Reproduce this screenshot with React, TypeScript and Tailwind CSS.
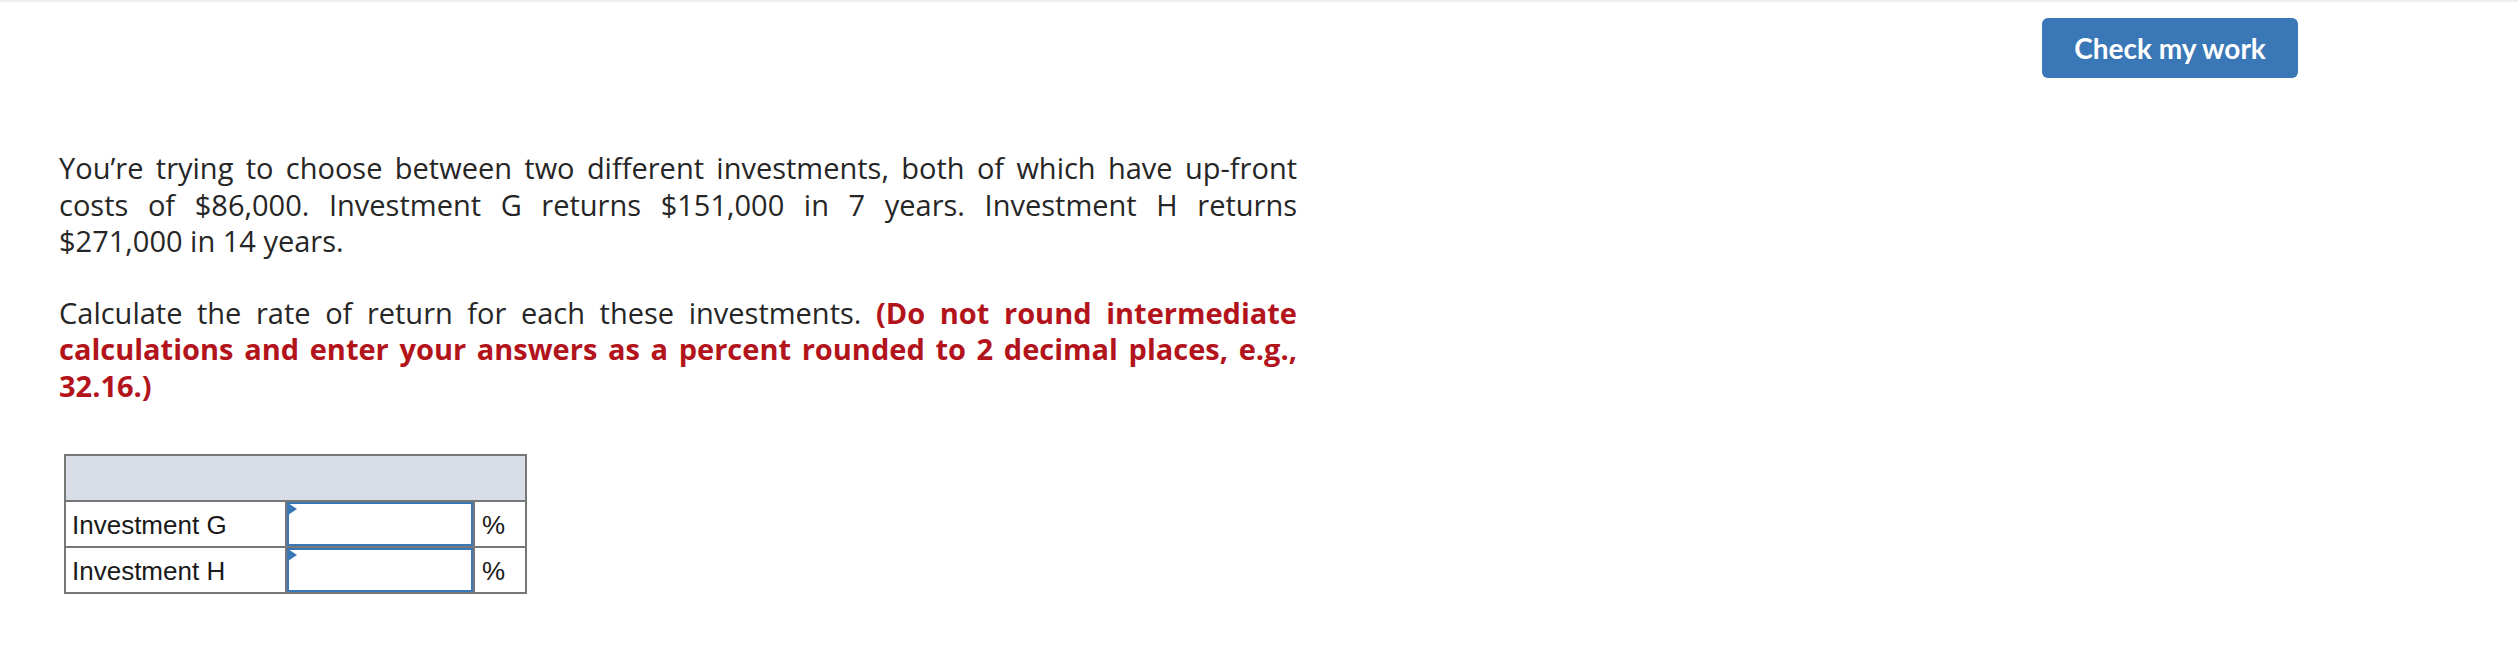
import React from 'react';

const rows = [{ label: 'Investment G' }, { label: 'Investment H' }];

// one printed line of the question, stretched edge to edge like the original
function Line({ children, last = false }: { children: React.ReactNode; last?: boolean }) {
  return (
    <span
      className={
        last
          ? 'block whitespace-nowrap text-left'
          : 'block whitespace-nowrap text-justify [text-align-last:justify]'
      }
    >
      {children}
    </span>
  );
}

function AnswerCell() {
  return (
    <td className="p-0 border-2 border-[#777777]">
      <div className="relative h-[44px] w-full border-2 border-[#3a77b6] bg-white">
        <svg className="absolute -left-[1px] -top-[1px]" width="9" height="13" viewBox="0 0 9 13">
          <path d="M0 0 L9 6 L0 12 Z" fill="#3a77b6" />
        </svg>
      </div>
    </td>
  );
}

export default function App() {
  return (
    <div className="min-h-screen w-full bg-white" style={{ fontFamily: '"Open Sans", Lato, sans-serif' }}>
      <div className="h-[2px] w-full bg-[#eeeeee]" />

      {/* Header */}
      <div className="flex justify-end pr-[220px] pt-[16px]">
        <button
          className="h-[60px] w-[256px] rounded-[6px] bg-[#3a77b6] text-[28px] font-bold text-white"
          style={{ fontFamily: 'Lato, sans-serif' }}
        >
          Check my work
        </button>
      </div>

      {/* Question */}
      <div className="pl-[59px] pt-[72px] text-[#262626]">
        <p className="w-[1238px] text-[29px] leading-[36.5px]">
          <Line>You’re trying to choose between two different investments, both of which have up-front</Line>
          <Line>costs of $86,000. Investment G returns $151,000 in 7 years. Investment H returns</Line>
          <Line last>$271,000 in 14 years.</Line>
        </p>
        <p className="mt-[35px] w-[1238px] text-[29px] leading-[36.5px]">
          <Line>
            Calculate the rate of return for each these investments.{' '}
            <strong className="font-bold text-[#b3141c]">(Do not round intermediate</strong>
          </Line>
          <Line>
            <strong className="font-bold text-[#b3141c]">
              calculations and enter your answers as a percent rounded to 2 decimal places, e.g.,
            </strong>
          </Line>
          <Line last>
            <strong className="font-bold text-[#b3141c]">32.16.)</strong>
          </Line>
        </p>

        <table
          className="ml-[5px] mt-[50px] w-[461px] table-fixed border-collapse border-2 border-[#777777] text-[26px] text-[#1a1a1a]"
          style={{ fontFamily: '"Liberation Sans", Arial, sans-serif' }}
        >
          <colgroup>
            <col className="w-[221px]" />
            <col className="w-[188px]" />
            <col className="w-[52px]" />
          </colgroup>
          <thead>
            <tr>
              <th colSpan={3} className="h-[46px] border-2 border-[#777777] bg-[#d9dde7]" />
            </tr>
          </thead>
          <tbody>
            {rows.map((r) => (
              <tr key={r.label}>
                <td className="h-[46px] border-2 border-[#777777] pl-[6px] pt-[2px] align-middle">{r.label}</td>
                <AnswerCell />
                <td className="border-2 border-[#777777] pl-[7px] pt-[2px]">%</td>
              </tr>
            ))}
          </tbody>
        </table>
      </div>
    </div>
  );
}
